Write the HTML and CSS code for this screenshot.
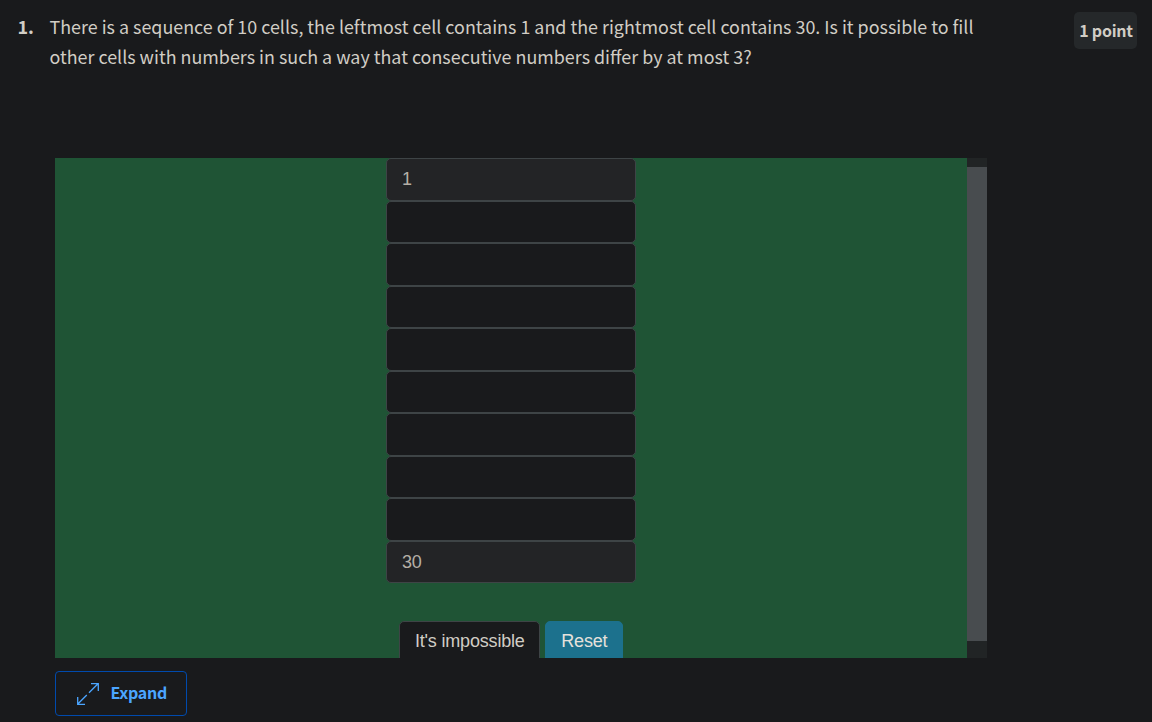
FILE: index.html
```html
<!DOCTYPE html>
<html lang="en">
<head>
<meta charset="utf-8">
<title>Quiz question</title>
<link rel="stylesheet" href="styles.css">
</head>
<body>
<main class="question">
  <header class="prompt">
    <span class="number">1.</span>
    <p class="text"><span>There is a sequence of 10 cells, the leftmost cell contains 1 and the rightmost cell contains 30. Is it possible to fill</span><br><span>other cells with numbers in such a way that consecutive numbers differ by at most 3?</span></p>
    <span class="points">1 point</span>
  </header>
  <section class="widget">
    <div class="board">
      <div class="cells">
        <input class="cell" value="1" disabled>
        <input class="cell">
        <input class="cell">
        <input class="cell">
        <input class="cell">
        <input class="cell">
        <input class="cell">
        <input class="cell">
        <input class="cell">
        <input class="cell cell-last" value="30" disabled>
      </div>
      <div class="actions">
        <button class="btn btn-plain">It's impossible</button>
        <button class="btn btn-reset">Reset</button>
      </div>
    </div>
    <div class="scrollbar"><div class="thumb"></div></div>
  </section>
  <button class="expand">
    <svg class="expand-icon" width="22" height="22" viewBox="0 0 22 22" fill="none" stroke="currentColor" stroke-width="1.3"><path d="M12 9.8 21 .8M14 .7h7.3v7.3M9.8 12 .8 21M.7 14v7.3h7.3"/></svg>
    <span class="expand-label">Expand</span>
  </button>
</main>
</body>
</html>
```
FILE: styles.css
```css
* { box-sizing: border-box; }
body {
  margin: 0;
  height: 722px;
  overflow: hidden;
  background: #191a1c;
  color: #d1cdc5;
  font-family: "Noto Sans CJK SC", "Noto Sans", sans-serif;
}
.question { padding: 11px 15px 0 17px; }
.prompt { display: flex; height: 147px; align-items: flex-start; }
.number { width: 32.5px; padding-left: 0.5px; font-size: 18px; line-height: 30px; font-weight: 700; }
.text { margin: 0; flex: 1; font-size: 17.905px; line-height: 30px; white-space: nowrap; }
.points {
  width: 63px;
  height: 37px;
  margin-top: 1px;
  border-radius: 5px;
  background: #25282a;
  font-size: 16px;
  font-weight: 700;
  letter-spacing: -0.25px;
  line-height: 37px;
  text-align: center;
  text-indent: 1px;
  white-space: nowrap;
}
.widget { display: flex; width: 932px; height: 500px; margin-left: 38px; overflow: hidden; }
.board { width: 912px; background: #1f5435; font-family: "Liberation Sans", Arial, sans-serif; }
.cells { display: flex; flex-direction: column; width: 250px; margin-left: 331px; }
.cell {
  width: 250px;
  height: 42.5px;
  padding: 0 15px;
  border: 1px solid #3e4446;
  border-radius: 5px;
  background: #191a1c;
  color: #b5afa6;
  font: 18px "Liberation Sans", Arial, sans-serif;
  letter-spacing: -0.2px;
}
.cell:disabled { background: #232426; }
.cell-last { padding-top: 1px; }
.actions { display: flex; gap: 5px; margin: 38px 0 0 344px; }
.btn { height: 42px; padding: 0 0 2px 0.6px; border-radius: 5px; font: 18px "Liberation Sans", Arial, sans-serif; letter-spacing: -0.18px; }
.btn-plain { width: 141px; border: 1px solid #3e4446; background: #191a1c; color: #d1cdc5; }
.btn-reset { width: 78px; border: 1px solid #1c718d; background: #1c718d; color: #e5e1dc; }
.scrollbar { width: 20px; padding: 9px 0 17px 0; background: #212425; }
.thumb { height: 474px; background: #484c4f; }
.expand {
  display: flex;
  align-items: center;
  width: 132px;
  height: 45px;
  margin: 13px 0 0 38px;
  padding: 0 0 0 21px;
  gap: 11.5px;
  border: 1px solid #004aad;
  border-radius: 4px;
  background: transparent;
  color: #4ba5ff;
  font: 700 16px "Noto Sans CJK SC", "Noto Sans", sans-serif;
  letter-spacing: -0.3px;
}
.expand-label { padding-bottom: 3px; }
```
